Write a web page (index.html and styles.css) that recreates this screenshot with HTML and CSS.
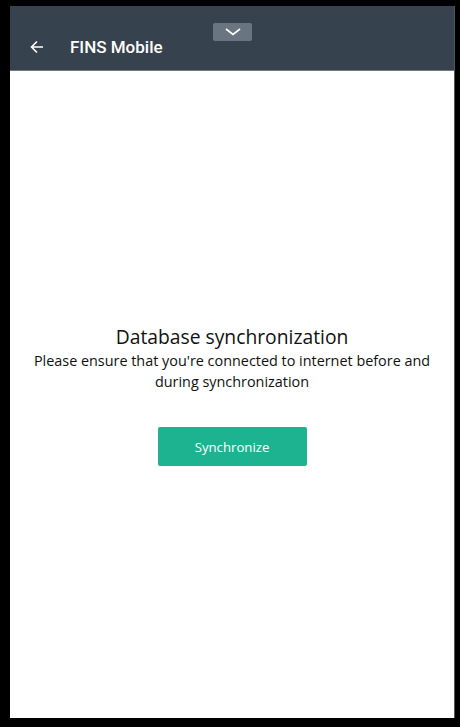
FILE: index.html
```html
<!DOCTYPE html>
<html lang="en">
<head>
    <meta charset="UTF-8">
    <meta name="viewport" content="width=device-width, initial-scale=1.0">
    <title>FINS Mobile | Sync</title>
    <link rel="stylesheet" href="styles.css">
</head>
<body>

    <div class="screen">
        <header class="toolbar">
            <span class="back">
                <svg width="14" height="14" viewBox="0 0 14 14">
                    <path d="M13 7H1.5M7 1.5L1.5 7L7 12.5" fill="none" stroke="#fff" stroke-width="1.6"/>
                </svg>
            </span>
            <span class="title">FINS Mobile</span>
            <span class="pull-tab">
                <svg width="16" height="8" viewBox="0 0 16 8">
                    <path d="M1 1L8 6.5L15 1" fill="none" stroke="#fff" stroke-width="1.6"/>
                </svg>
            </span>
        </header>

        <main class="content">
            <div class="sync-box">
                <h2>Database synchronization</h2>
                <p>Please ensure that you're connected to internet before and during synchronization</p>
                <button class="button">Synchronize</button>
            </div>
        </main>
    </div>

</body>
</html>
```

FILE: styles.css
```css
body {
    background-color: #000;
    margin: 0;
    padding: 0;
}

.screen {
    margin: 6px 0 0 10px;
    width: 445px;
    height: 712px;
    background-color: #fff;
    display: flex;
    flex-direction: column;
    box-sizing: border-box;
    border-right: 1px solid #555;
}

.toolbar {
    position: relative;
    height: 65px;
    background-color: #37424f;
    border-bottom: 1px solid #6e7986;
    box-sizing: border-box;
    display: flex;
    align-items: center;
    padding-top: 18px;
    font-family: Roboto, sans-serif;
    color: #fff;
}

.back {
    display: flex;
    margin-left: 20px;
    width: 40px;
}

.title {
    font-size: 17px;
    font-weight: 500;
}

.pull-tab {
    position: absolute;
    left: 203px;
    top: 17px;
    width: 39px;
    height: 18px;
    background-color: #6b7581;
    border-radius: 2px;
    display: flex;
    align-items: center;
    justify-content: center;
}

.content {
    flex: 1;
    display: flex;
    align-items: center;
    justify-content: center;
    font-family: 'Open Sans', sans-serif;
    color: #111;
    text-align: center;
}

.sync-box {
    display: flex;
    flex-direction: column;
    align-items: center;
    margin-top: 1px;
}

.sync-box h2 {
    font-size: 19.3px;
    font-weight: 400;
    margin: 0;
    line-height: 26px;
}

.sync-box p {
    font-size: 14.4px;
    line-height: 21px;
    margin: 0;
    width: 430px;
}

.button {
    margin-top: 35px;
    width: 149px;
    height: 39px;
    background-color: #1eb390;
    color: #fff;
    font-family: 'Open Sans', sans-serif;
    font-size: 13.2px;
    border: none;
    border-radius: 2px;
    cursor: pointer;
}
```
